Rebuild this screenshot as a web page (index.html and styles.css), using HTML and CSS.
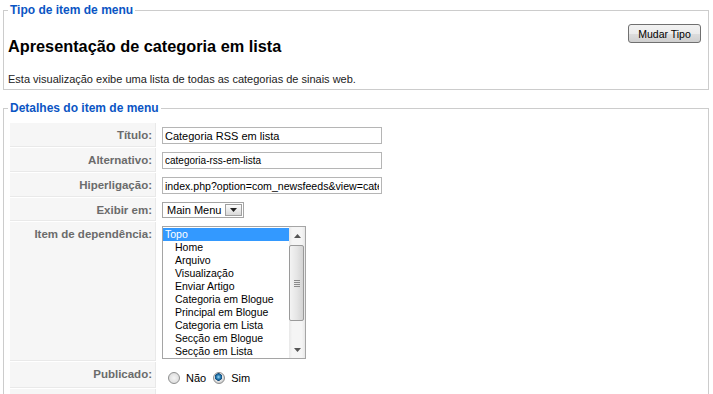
FILE: index.html
```html
<!DOCTYPE html>
<html lang="pt">
<head>
    <meta charset="UTF-8">
    <title>Editar item de menu</title>
    <link rel="stylesheet" href="styles.css">
</head>
<body>
    <div class="page">
        <fieldset class="box">
            <legend>Tipo de item de menu</legend>
            <div class="type-head">
                <h2>Apresentação de categoria em lista</h2>
                <button type="button" class="btn">Mudar Tipo</button>
            </div>
            <p class="type-desc">Esta visualização exibe uma lista de todas as categorias de sinais web.</p>
        </fieldset>

        <fieldset class="box">
            <legend>Detalhes do item de menu</legend>
            <table class="admintable">
                <tr>
                    <td class="key"><label for="name">Título:</label></td>
                    <td><input type="text" id="name" class="inputbox" value="Categoria RSS em lista"></td>
                </tr>
                <tr>
                    <td class="key"><label for="alias">Alternativo:</label></td>
                    <td><input type="text" id="alias" class="inputbox small" value="categoria-rss-em-lista"></td>
                </tr>
                <tr>
                    <td class="key"><label for="link">Hiperligação:</label></td>
                    <td><input type="text" id="link" class="inputbox link" value="index.php?option=com_newsfeeds&amp;view=categories"></td>
                </tr>
                <tr>
                    <td class="key"><label>Exibir em:</label></td>
                    <td>
                        <span class="select">
                            <span class="select-value">Main Menu</span>
                            <span class="select-arrow">
                                <svg width="7" height="4" viewBox="0 0 7 4"><path d="M0 0h7L3.5 4z" fill="#222"/></svg>
                            </span>
                        </span>
                    </td>
                </tr>
                <tr>
                    <td class="key"><label>Item de dependência:</label></td>
                    <td class="list-cell">
                        <div class="listbox" role="listbox">
                            <div class="list-items">
                                <div class="item selected">Topo</div>
                                <div class="item child">Home</div>
                                <div class="item child">Arquivo</div>
                                <div class="item child">Visualização</div>
                                <div class="item child">Enviar Artigo</div>
                                <div class="item child">Categoria em Blogue</div>
                                <div class="item child">Principal em Blogue</div>
                                <div class="item child">Categoria em Lista</div>
                                <div class="item child">Secção em Blogue</div>
                                <div class="item child">Secção em Lista</div>
                            </div>
                            <div class="scrollbar">
                                <div class="sb-btn">
                                    <svg width="7" height="4" viewBox="0 0 7 4"><path d="M0 4h7L3.5 0z" fill="#555"/></svg>
                                </div>
                                <div class="sb-thumb">
                                    <svg width="6" height="7" viewBox="0 0 6 7"><path d="M0 .5h6M0 2.5h6M0 4.5h6M0 6.5h6" stroke="#8a8a8a"/></svg>
                                </div>
                                <div class="sb-track"></div>
                                <div class="sb-btn">
                                    <svg width="7" height="4" viewBox="0 0 7 4"><path d="M0 0h7L3.5 4z" fill="#555"/></svg>
                                </div>
                            </div>
                        </div>
                    </td>
                </tr>
                <tr>
                    <td class="key"><label>Publicado:</label></td>
                    <td class="radio-cell">
                        <div class="radio-group">
                            <input type="radio" id="pub0" name="published" value="0">
                            <label for="pub0">Não</label>
                            <input type="radio" id="pub1" name="published" value="1" checked>
                            <label for="pub1">Sim</label>
                        </div>
                    </td>
                </tr>
                <tr class="last-row">
                    <td class="key"></td>
                    <td></td>
                </tr>
            </table>
        </fieldset>
    </div>
</body>
</html>
```

FILE: styles.css
```css
html {
    overflow: hidden;
}

body {
    margin: 0;
    background: #fff;
    color: #222;
    font-family: "Liberation Sans", Arial, sans-serif;
    font-size: 11px;
}

.page {
    padding: 3px 4px 0 3px;
}

.box {
    margin: 0 0 11px;
    padding: 6px 7px 3px 4px;
    border: 1px solid #ccc;
}

.box legend {
    padding: 0 2px;
    color: #0b55c4;
    font-size: 12px;
    font-weight: bold;
    line-height: 15px;
}

.type-head {
    display: flex;
    justify-content: space-between;
    align-items: flex-start;
}

.type-head h2 {
    margin: 12px 0 0;
    color: #000;
    font-size: 16.3px;
    line-height: 20px;
}

.btn {
    width: 73px;
    height: 19px;
    padding: 0;
    border: 1px solid #707070;
    border-radius: 3px;
    background: linear-gradient(#f2f2f2 0%, #ebebeb 50%, #dddddd 51%, #cfcfcf 100%);
    color: #000;
    font-family: "Liberation Sans", Arial, sans-serif;
    font-size: 10.5px;
}

.type-desc {
    margin: 16px 0 0;
    line-height: 14px;
}

.admintable {
    margin-left: 1px;
    border-spacing: 1px;
}

.admintable td {
    padding: 4px 5px 3px;
    vertical-align: top;
}

.admintable td.key {
    width: 139px;
    padding: 6px 3px 0;
    background: #f6f6f6;
    border-bottom: 1px solid #e9e9e9;
    border-right: 1px solid #e9e9e9;
    color: #6b6b6b;
    font-size: 11.5px;
    font-weight: bold;
    line-height: 13px;
    text-align: right;
}

.inputbox {
    display: block;
    box-sizing: border-box;
    width: 220px;
    height: 17px;
    margin: 0;
    padding: 0 2px;
    border: 1px solid #b5b5b5;
    color: #000;
    font-family: "Liberation Sans", Arial, sans-serif;
    font-size: 11px;
}

.inputbox.small {
    font-size: 10px;
}

.inputbox.link {
    font-size: 10.6px;
}

.select {
    display: flex;
    align-items: center;
    box-sizing: border-box;
    width: 82px;
    height: 16px;
    border: 1px solid #a5a5a5;
    color: #000;
}

.select-value {
    flex: 1;
    padding-left: 4px;
    line-height: 14px;
}

.select-arrow {
    display: flex;
    align-items: center;
    justify-content: center;
    box-sizing: border-box;
    width: 17px;
    height: 12px;
    margin-right: 1px;
    border: 1px solid #a0a0a0;
    background: linear-gradient(#fdfdfd, #d9d9d9);
}

.admintable td.list-cell {
    padding-bottom: 2px;
}

.listbox {
    display: flex;
    box-sizing: border-box;
    width: 144px;
    height: 133px;
    border: 1px solid #a5a5a5;
    background: #fff;
}

.list-items {
    flex: 1;
    padding-top: 1px;
    overflow: hidden;
}

.item {
    height: 13px;
    padding-left: 2px;
    color: #000;
    font-size: 10.5px;
    line-height: 13px;
    white-space: nowrap;
}

.item.child {
    padding-left: 12px;
}

.item.selected {
    background: #3399ff;
    color: #fff;
}

.scrollbar {
    display: flex;
    flex-direction: column;
    width: 16px;
    background: linear-gradient(90deg, #e8e8e8, #f5f5f5 20%, #f5f5f5 80%, #e8e8e8);
}

.sb-btn {
    display: flex;
    align-items: center;
    justify-content: center;
    height: 17px;
}

.sb-thumb {
    display: flex;
    align-items: center;
    justify-content: center;
    box-sizing: border-box;
    height: 76px;
    margin: 1px 1px 0 0;
    border: 1px solid #9a9a9a;
    border-radius: 2px;
    background: linear-gradient(90deg, #f3f3f3, #e6e6e6 50%, #d4d4d4);
}

.sb-track {
    flex: 1;
}

.admintable td.radio-cell {
    padding-top: 9px;
    padding-bottom: 3px;
}

.radio-group {
    display: flex;
    align-items: center;
    height: 14px;
    color: #000;
}

.radio-group input {
    appearance: none;
    width: 12px;
    height: 12px;
    margin: 0 6px;
    border: 1px solid #8e8f8f;
    border-radius: 50%;
    background: radial-gradient(circle at 50% 50%, #f4f4f4, #d6d6d6);
}

.radio-group input:checked {
    background: radial-gradient(circle at 45% 40%, #9ad6f6 0, #2a7fb4 2px, #0f4a7c 3.5px, #e6e6e6 4px, #d0d0d0 6px);
}

.radio-group label {
    margin-right: 1px;
}

.last-row td {
    height: 24px;
}
```
